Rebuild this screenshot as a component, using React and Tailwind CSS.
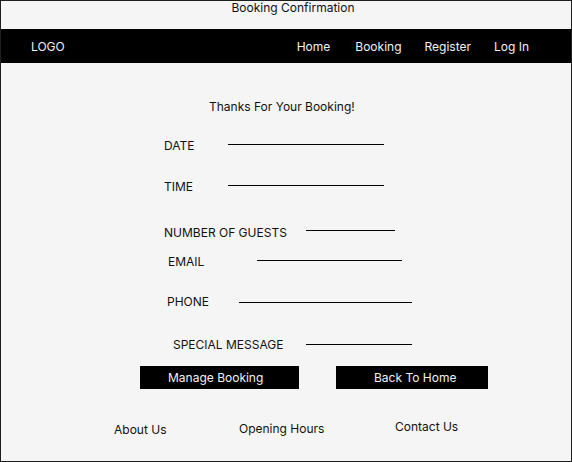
const rows = [
  { label: 'DATE', ml: 'ml-[163px]', box: 'w-[64px]', line: 'w-[156px]', mt: 'mt-[19px]', lt: 'mt-[8px]' },
  { label: 'TIME', ml: 'ml-[163px]', box: 'w-[64px]', line: 'w-[156px]', mt: 'mt-[21px]', lt: 'mt-[8px]' },
  { label: 'NUMBER OF GUESTS', ml: 'ml-[163px]', box: 'w-[142px]', line: 'w-[89px]', mt: 'mt-[26px]', lt: 'mt-[7px]' },
  { label: 'EMAIL', ml: 'ml-[167px]', box: 'w-[89px]', line: 'w-[145px]', mt: 'mt-[9px]', lt: 'mt-[8px]' },
  { label: 'PHONE', ml: 'ml-[166px]', box: 'w-[72px]', line: 'w-[173px]', mt: 'mt-[20px]', lt: 'mt-[10px]' },
  { label: 'SPECIAL MESSAGE', ml: 'ml-[172px]', box: 'w-[133px]', line: 'w-[106px]', mt: 'mt-[23px]', lt: 'mt-[9px]' },
];

function DetailRow({ label, ml, box, line, mt, lt }) {
  return (
    <div className={`flex items-start h-[20px] ${mt} ${ml}`}>
      <span className={`${box} leading-[20px] shrink-0`}>{label}</span>
      <div className={`${line} ${lt} h-px bg-black`} />
    </div>
  );
}

export default function App() {
  return (
    <div className="w-[572px] h-[462px] border border-[#1e1e1e] bg-[#f5f5f5] text-[12px] text-[#111] font-['Inter',sans-serif] flex flex-col overflow-hidden">
      <div className="h-[28px] pl-[14px] text-center leading-[14px]">Booking Confirmation</div>

      <nav className="h-[34px] -mx-px pt-[2px] bg-black text-[#f2f2f2] flex items-center">
        <span className="ml-[31px]">LOGO</span>
        <div className="ml-auto mr-[43px] flex gap-[23px]">
          <span className="mr-[2px]">Home</span>
          <span>Booking</span>
          <span>Register</span>
          <span>Log In</span>
        </div>
      </nav>

      <main className="flex flex-col">
        <p className="mt-[34px] ml-[208px] h-[20px] leading-[20px]">Thanks For Your Booking!</p>

        {rows.map((r) => (
          <DetailRow key={r.label} {...r} />
        ))}

        <div className="mt-[11px] ml-[139px] flex gap-[37px]">
          <button className="w-[159px] h-[23px] bg-black text-[#f2f2f2] text-[12px] text-left pl-[28px]">Manage Booking</button>
          <button className="w-[152px] h-[23px] bg-black text-[#f2f2f2] text-[12px] text-left pl-[38px]">Back To Home</button>
        </div>

        <footer className="mt-[31px] ml-[113px] flex items-start">
          <span className="w-[125px] leading-[20px]">About Us</span>
          <span className="w-[156px] leading-[20px] -mt-px">Opening Hours</span>
          <span className="leading-[20px] -mt-[3px]">Contact Us</span>
        </footer>
      </main>
    </div>
  );
}
